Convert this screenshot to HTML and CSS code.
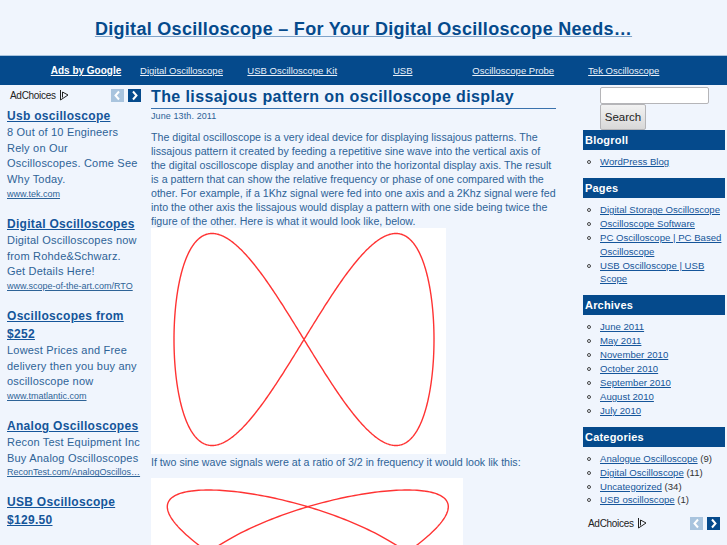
FILE: index.html
```html
<!DOCTYPE html>
<html lang="en">
<head>
  <meta charset="UTF-8" />
  <title>Digital Oscilloscope</title>
  <link rel="stylesheet" href="styles.css">
</head>
<body>
  <div class="header">
    <h1><a href="#">Digital Oscilloscope – For Your Digital Oscilloscope Needs…</a></h1>
  </div>

  <div class="nav">
    <a href="#" class="nav-title">Ads by Google</a>
    <a href="#">Digital Oscilloscope</a>
    <a href="#">USB Oscilloscope Kit</a>
    <a href="#">USB</a>
    <a href="#">Oscilloscope Probe</a>
    <a href="#">Tek Oscilloscope</a>
  </div>

  <div class="page">
    <div class="ads">
      <div class="adbar">
        <span class="adchoices">AdChoices <svg class="ad-tri" viewBox="0 0 10 12"><path d="M1.5 1 L1.5 11 L9 6 L3.5 3 L3.5 8.5" /></svg></span>
        <span class="arrows">
          <span class="arrow off"><svg viewBox="0 0 13 13"><path d="M8 2.5 L4.5 6.5 L8 10.5" /></svg></span>
          <span class="arrow"><svg viewBox="0 0 13 13"><path d="M5 2.5 L8.5 6.5 L5 10.5" /></svg></span>
        </span>
      </div>

      <div class="ad">
        <a href="#" class="ad-head">Usb oscilloscope</a>
        <p>8 Out of 10 Engineers Rely on Our Oscilloscopes. Come See Why Today.</p>
        <a href="#" class="ad-url">www.tek.com</a>
      </div>
      <div class="ad">
        <a href="#" class="ad-head">Digital Oscilloscopes</a>
        <p>Digital Oscilloscopes now from Rohde&amp;Schwarz. Get Details Here!</p>
        <a href="#" class="ad-url">www.scope-of-the-art.com/RTO</a>
      </div>
      <div class="ad">
        <a href="#" class="ad-head">Oscilloscopes from $252</a>
        <p>Lowest Prices and Free delivery then you buy any oscilloscope now</p>
        <a href="#" class="ad-url">www.tmatlantic.com</a>
      </div>
      <div class="ad">
        <a href="#" class="ad-head">Analog Oscilloscopes</a>
        <p>Recon Test Equipment Inc Buy Analog Oscilloscopes</p>
        <a href="#" class="ad-url">ReconTest.com/AnalogOscillos…</a>
      </div>
      <div class="ad">
        <a href="#" class="ad-head">USB Oscilloscope $129.50</a>
      </div>
    </div>

    <div class="main">
      <h2>The lissajous pattern on oscilloscope display</h2>
      <div class="date">June 13th. 2011</div>
      <p class="intro">The digital oscilloscope is a very ideal device for displaying lissajous patterns. The lissajous pattern it created by feeding a repetitive sine wave into the vertical axis of the digital oscilloscope display and another into the horizontal display axis. The result is a pattern that can show the relative frequency or phase of one compared with the other. For example, if a 1Khz signal were fed into one axis and a 2Khz signal were fed into the other axis the lissajous would display a pattern with one side being twice the figure of the other. Here is what it would look like, below.</p>
      <svg class="plot plot-a" viewBox="0 0 295 226" data-fx="1" data-fy="2" data-cx="153" data-cy="111.5" data-ax="130" data-ay="106"><path /></svg>
      <p class="caption">If two sine wave signals were at a ratio of 3/2 in frequency it would look lik this:</p>
      <svg class="plot plot-b" viewBox="0 0 312 274" data-fx="3" data-fy="2" data-cx="156.8" data-cy="137" data-ax="140.5" data-ay="125"><path /></svg>
    </div>

    <div class="side">
      <form class="search">
        <input type="text">
        <button type="button">Search</button>
      </form>

      <h3>Blogroll</h3>
      <ul>
        <li><a href="#">WordPress Blog</a></li>
      </ul>

      <h3>Pages</h3>
      <ul>
        <li><a href="#">Digital Storage Oscilloscope</a></li>
        <li><a href="#">Oscilloscope Software</a></li>
        <li><a href="#">PC Oscilloscope | PC Based Oscilloscope</a></li>
        <li><a href="#">USB Oscilloscope | USB Scope</a></li>
      </ul>

      <h3>Archives</h3>
      <ul>
        <li><a href="#">June 2011</a></li>
        <li><a href="#">May 2011</a></li>
        <li><a href="#">November 2010</a></li>
        <li><a href="#">October 2010</a></li>
        <li><a href="#">September 2010</a></li>
        <li><a href="#">August 2010</a></li>
        <li><a href="#">July 2010</a></li>
      </ul>

      <h3>Categories</h3>
      <ul>
        <li><a href="#">Analogue Oscilloscope</a> (9)</li>
        <li><a href="#">Digital Oscilloscope</a> (11)</li>
        <li><a href="#">Uncategorized</a> (34)</li>
        <li><a href="#">USB oscilloscope</a> (1)</li>
      </ul>

      <div class="adbar adbar-side">
        <span class="adchoices">AdChoices <svg class="ad-tri" viewBox="0 0 10 12"><path d="M1.5 1 L1.5 11 L9 6 L3.5 3 L3.5 8.5" /></svg></span>
        <span class="arrows">
          <span class="arrow off"><svg viewBox="0 0 13 13"><path d="M8 2.5 L4.5 6.5 L8 10.5" /></svg></span>
          <span class="arrow"><svg viewBox="0 0 13 13"><path d="M5 2.5 L8.5 6.5 L5 10.5" /></svg></span>
        </span>
      </div>
    </div>
  </div>

  <script src="script.js"></script>
</body>
</html>
```

FILE: styles.css
```css
:root {
  --bg: #f0f5fd;
  --blue: #054a8c;
  --text: #2e6397;
  --link: #15559a;
}

html, body {
  margin: 0;
  height: 545px;
  overflow: hidden;
}

body {
  font-family: "Liberation Sans", Arial, sans-serif;
  background: var(--bg);
  color: var(--text);
}

a {
  color: inherit;
}

.header {
  height: 55px;
  box-sizing: border-box;
  padding-top: 17px;
  text-align: center;
}

h1 {
  margin: 0;
  font-size: 18px;
  line-height: 24px;
  color: var(--blue);
  letter-spacing: 0.3px;
}

h1 a {
  text-decoration-color: #7fa3c9;
}

.nav {
  display: grid;
  grid-template-columns: 80px 111px repeat(4, 110.5px);
  padding-left: 46px;
  height: 30px;
  align-items: center;
  text-align: center;
  background: var(--blue);
  border-top: 1px solid #a9c4de;
  box-sizing: border-box;
  font-size: 9.5px;
  color: #e8f0fa;
  white-space: nowrap;
}

.nav-title {
  font-size: 10px;
  font-weight: bold;
  color: #fff;
}

.page {
  display: flex;
  align-items: flex-start;
}

/* left ad column */
.ads {
  width: 151px;
  flex: none;
  box-sizing: border-box;
  padding: 3px 10px 0 7px;
}

.adbar {
  display: flex;
  align-items: center;
  justify-content: space-between;
  height: 14px;
  padding-left: 3px;
  margin-bottom: 5px;
}

.adchoices {
  display: flex;
  align-items: center;
  gap: 3px;
  font-size: 10px;
  letter-spacing: -0.3px;
  color: #222;
}

.ad-tri {
  width: 10px;
  height: 12px;
  fill: none;
  stroke: #222;
  stroke-width: 1;
}

.arrows {
  display: flex;
  gap: 4px;
}

.arrow {
  width: 13px;
  height: 13px;
  background: var(--blue);
}

.arrow.off {
  background: #a9c4de;
}

.arrow svg {
  display: block;
  fill: none;
  stroke: #fff;
  stroke-width: 2;
}

.ad {
  margin-bottom: 15px;
  font-size: 11px;
}

.ad-head {
  display: block;
  font-size: 12px;
  line-height: 18px;
  font-weight: bold;
  color: var(--link);
  letter-spacing: 0.3px;
}

.ad p {
  margin: 0;
  font-size: 11px;
  line-height: 15.7px;
  letter-spacing: 0.2px;
}

.ad-url {
  display: block;
  font-size: 9px;
  line-height: 12px;
  white-space: nowrap;
}

/* post */
.main {
  width: 405px;
  flex: none;
}

h2 {
  margin: 0;
  padding-top: 2px;
  height: 21px;
  font-size: 16px;
  line-height: 20px;
  color: var(--blue);
  border-bottom: 1px solid #3a72ad;
  letter-spacing: 0.4px;
}

.date {
  margin-top: 1px;
  font-size: 9px;
  line-height: 12px;
  letter-spacing: 0.1px;
}

.intro {
  margin: 8px 0 0;
  font-size: 10.65px;
  line-height: 14px;
}

.caption {
  margin: 0;
  padding-top: 1px;
  height: 23px;
  font-size: 10.65px;
  line-height: 14px;
}

.plot {
  display: block;
  background: #fff;
  fill: none;
  stroke: #f33;
  stroke-width: 1.4;
}

.plot-a {
  width: 295px;
  height: 226px;
}

.plot-b {
  width: 312px;
  height: 274px;
}

/* right sidebar */
.side {
  width: 142px;
  flex: none;
  margin-left: 27px;
  font-size: 9.6px;
}

.search {
  padding: 2px 0 0 17px;
}

.search input {
  display: block;
  width: 109px;
  height: 17px;
  box-sizing: border-box;
  margin: 0;
  background: #fff;
  border: 1px solid #b5b5b8;
  border-radius: 2px;
}

.search button {
  display: block;
  width: 46px;
  height: 26px;
  padding: 0;
  font: 11.5px "Liberation Sans", Arial, sans-serif;
  color: #222;
  background: linear-gradient(#f2f2f2, #d8d8d8);
  border: 1px solid #b5b5b8;
  border-radius: 2px;
}

h3 {
  margin: 0;
  height: 20px;
  padding-left: 2px;
  font-size: 11px;
  line-height: 20px;
  color: #fff;
  background: var(--blue);
  letter-spacing: 0.2px;
}

.side ul {
  margin: 0;
  padding: 5px 0 9px 17px;
  list-style: none;
  color: #333;
}

.side li {
  position: relative;
  line-height: 13.9px;
}

.side li::before {
  content: "";
  position: absolute;
  left: -13px;
  top: 5px;
  width: 2px;
  height: 2px;
  border: 1px solid #444;
  border-radius: 50%;
}

.side li a {
  color: var(--link);
}

.adbar-side {
  margin: 0 5px 0 2px;
}
```

FILE: script.js
```js
// draw the lissajous curves from their frequencies
document.querySelectorAll(".plot").forEach(svg => {
  const d = svg.dataset;
  let points = [];
  for (let i = 0; i <= 720; i++) {
    const t = i * Math.PI / 360;
    const x = +d.cx + d.ax * Math.sin(d.fx * t);
    const y = +d.cy - d.ay * Math.sin(d.fy * t);
    points.push(x.toFixed(2) + " " + y.toFixed(2));
  }
  svg.querySelector("path").setAttribute("d", "M" + points.join("L") + "Z");
});
```
